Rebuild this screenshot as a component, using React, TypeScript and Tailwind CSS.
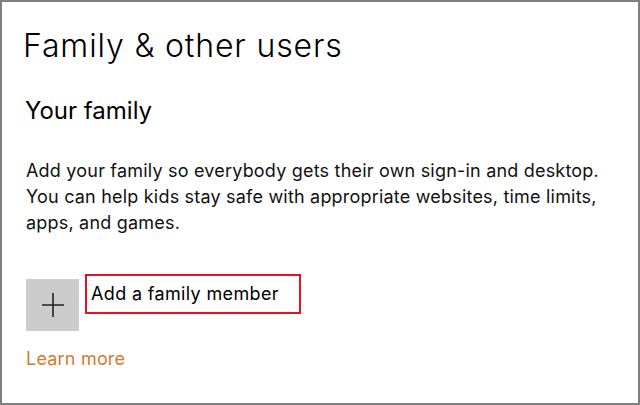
export default function App() {
  return (
    <div
      className="w-[640px] h-[405px] bg-white border-2 border-[#7f7f7f] text-black overflow-hidden"
      style={{ fontFamily: 'Inter, "Open Sans", sans-serif' }}
    >
      <div className="pl-[24px] pr-4 pt-[24px]">
        <h1 className="-ml-[3px] text-[32px] font-light leading-[40px] tracking-[0.85px]">Family &amp; other users</h1>
        <h2 className="mt-[30px] -ml-[1px] text-[24px] leading-[30px] font-normal">Your family</h2>
        <p className="mt-[32px] text-[18px] leading-[26px] tracking-[0.2px] text-[#111]">
          Add your family so everybody gets their own sign-in and desktop.
          <br />
          You can help kids stay safe with appropriate websites, time limits,
          <br />
          apps, and games.
        </p>
        <div className="mt-[38px] flex items-start">
          <div className="w-[53px] h-[52px] mt-[5px] bg-[#cccccc] flex items-center justify-center">
            <svg width="22" height="24" viewBox="0 0 22 24" fill="none" stroke="#222" strokeWidth="1.6">
              <path d="M11 0v24M0 12h22" />
            </svg>
          </div>
          <div className="ml-[6px] w-[216px] h-[40px] border-2 border-[#e81123] pl-[4px] pt-[5px] text-[18px] leading-[26px] tracking-[0.35px]">
            Add a family member
          </div>
        </div>
        <a className="mt-[15px] block text-[18px] leading-[26px] tracking-[0.2px] text-[#d67a30]">Learn more</a>
      </div>
    </div>
  );
}
